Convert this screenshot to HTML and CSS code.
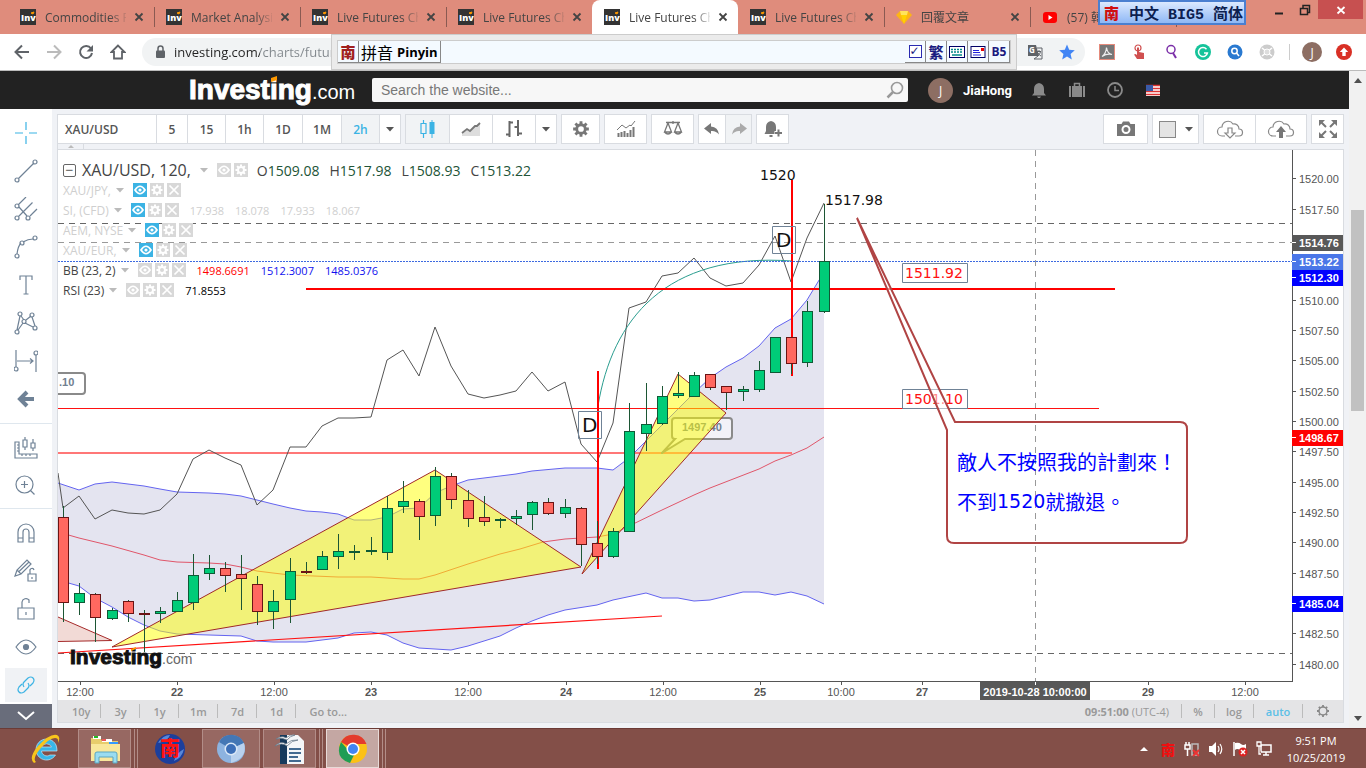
FILE: index.html
```html
<!DOCTYPE html>
<html lang="en">
<head>
<meta charset="UTF-8">
<meta name="viewport" content="width=device-width, initial-scale=1.0">
<title>Live Futures Charts</title>
<link rel="stylesheet" href="styles.css">
</head>
<body>

<!-- shared icons -->
<svg class="sprite" aria-hidden="true">
  <symbol id="i-inv" viewBox="0 0 16 16"><rect width="16" height="16" fill="#333"/><text x="1" y="12" font-family="Open Sans, sans-serif" font-size="9" font-weight="800" fill="#fff">Inv</text><path d="M11 4l3-1-1 2z" fill="#f90" stroke="#f90"/></symbol>
  <symbol id="i-x" viewBox="0 0 10 10"><path d="M1.5 1.5l7 7M8.500 1.500l-7 7" stroke="currentColor" stroke-width="1.800" fill="none"/></symbol>
  <symbol id="i-eye" viewBox="0 0 14 14"><path d="M2 7q5-7.500 10 0q-5 7.500-10 0z" fill="none" stroke="#fff" stroke-width="1.700"/><circle cx="7" cy="7" r="1.600" fill="#fff"/></symbol>
  <symbol id="i-gear" viewBox="0 0 14 14"><circle cx="7" cy="7" r="3" fill="none" stroke="currentColor" stroke-width="2"/><path d="M7 1.500v2M7 10.500v2M1.500 7h2M10.500 7h2M3.100 3.100l1.400 1.400M9.500 9.500l1.400 1.400M10.900 3.100l-1.400 1.400M4.500 9.500l-1.400 1.400" stroke="currentColor" stroke-width="2"/></symbol>
  <symbol id="i-del" viewBox="0 0 14 14"><path d="M2.500 2.500l9 9M11.500 2.500l-9 9" stroke="#fff" stroke-width="1.700"/></symbol>
  <symbol id="i-caret" viewBox="0 0 8 5"><path d="M0 0h8L4 4.500z" fill="currentColor"/></symbol>
</svg>

<div class="tabstrip">
  <div class="tab"><svg class="fav"><use href="#i-inv"/></svg><a href="#" class="tab-title">Commodities Futures</a><button class="tab-close" aria-label="Close tab"><svg><use href="#i-x"/></svg></button></div>
  <div class="tab"><svg class="fav"><use href="#i-inv"/></svg><a href="#" class="tab-title">Market Analysis</a><button class="tab-close" aria-label="Close tab"><svg><use href="#i-x"/></svg></button></div>
  <div class="tab"><svg class="fav"><use href="#i-inv"/></svg><a href="#" class="tab-title">Live Futures Charts</a><button class="tab-close" aria-label="Close tab"><svg><use href="#i-x"/></svg></button></div>
  <div class="tab no-sep"><svg class="fav"><use href="#i-inv"/></svg><a href="#" class="tab-title">Live Futures Charts</a><button class="tab-close" aria-label="Close tab"><svg><use href="#i-x"/></svg></button></div>
  <div class="tab active no-sep"><svg class="fav"><use href="#i-inv"/></svg><a href="#" class="tab-title">Live Futures Charts</a><button class="tab-close" aria-label="Close tab"><svg><use href="#i-x"/></svg></button></div>
  <div class="tab"><svg class="fav"><use href="#i-inv"/></svg><a href="#" class="tab-title">Live Futures Charts</a><button class="tab-close" aria-label="Close tab"><svg><use href="#i-x"/></svg></button></div>
  <div class="tab"><svg class="fav" viewBox="0 0 16 16"><path d="M4 2h8l4 4-8 9-8-9z" fill="#fdb515"/><path d="M4 2h8l-1 4H5z" fill="#ffe45c"/><path d="M5 6h6l-3 9z" fill="#ffd200"/></svg><a href="#" class="tab-title">回覆文章</a><button class="tab-close" aria-label="Close tab"><svg><use href="#i-x"/></svg></button></div>
  <div class="tab"><svg class="fav" viewBox="0 0 16 16"><rect x="1" y="3" width="14" height="11" rx="3" fill="#f00"/><path d="M6.500 6v5l4-2.500z" fill="#fff"/></svg><a href="#" class="tab-title">(57) 韓</a></div>
  <div class="win-controls">
    <button aria-label="Minimize"><svg viewBox="0 0 12 12"><path d="M2 9.500h8" stroke="#222" stroke-width="2"/></svg></button>
    <button aria-label="Restore"><svg viewBox="0 0 12 12"><path d="M1.500 4.500h7v6h-7zM4 4V1.500h6.500v7H9" fill="none" stroke="#222" stroke-width="1.500"/></svg></button>
    <button class="win-close" aria-label="Close"><svg viewBox="0 0 12 12"><path d="M2.500 3l7 6.500M9.500 3l-7 6.500" stroke="#fff" stroke-width="1.800"/></svg></button>
  </div>
</div>

<div class="ime-badge"><b class="nan">南</b><span>中文 BIG5 简体</span></div>

<div class="navbar">
  <button class="nav-btn" aria-label="Back"><svg viewBox="0 0 16 16"><path d="M15 8H2M8 1.500L1.500 8 8 14.500" fill="none" stroke="#5f6368" stroke-width="2"/></svg></button>
  <button class="nav-btn" aria-label="Forward"><svg viewBox="0 0 16 16"><path d="M1 8h13M8 1.500L14.500 8 8 14.500" fill="none" stroke="#bbb" stroke-width="2"/></svg></button>
  <button class="nav-btn" aria-label="Reload"><svg viewBox="0 0 16 16"><path d="M13 4.500A6 6 0 1 0 14 9" fill="none" stroke="#5f6368" stroke-width="2"/><path d="M15 1v6.500H8.500z" fill="#5f6368"/></svg></button>
  <button class="nav-btn" aria-label="Home"><svg viewBox="0 0 16 16"><path d="M8 1.500L1.500 8H4v6.500h8V8h2.500z" fill="none" stroke="#5f6368" stroke-width="1.800"/></svg></button>
  <div class="address">
    <svg class="lock" viewBox="0 0 12 14"><rect x="2" y="5.500" width="9" height="7.500" rx="1" fill="#5f6368"/><path d="M4 6V3.500a2.500 2.500 0 0 1 5 0V6" fill="none" stroke="#5f6368" stroke-width="1.500"/></svg>
    <input type="text" value="investing.com/charts/futures-charts" aria-label="Address">
    <div class="address-icons">
      <button aria-label="Translate"><svg viewBox="0 0 16 16"><path d="M1 1h8l3 11H1z" fill="#5f6368"/><text x="2" y="9" font-family="Open Sans" font-size="8" font-weight="700" fill="#fff">G</text><path d="M10 4h5v11H7l4-3M9.500 7.500h4.500M12 6v1.500M10.500 12q3-2 3-4.500M11 9q1 2 3 3" fill="none" stroke="#5f6368"/></svg></button>
      <button aria-label="Bookmark"><svg viewBox="0 0 16 16"><path d="M8 0.500l2.200 5.200 5.600.5-4.200 3.700 1.200 5.600L8 12.600l-4.800 2.900 1.200-5.600L.2 6.200l5.600-.5z" fill="#4285f4"/></svg></button>
    </div>
  </div>
  <div class="extensions">
    <button aria-label="PDF"><svg viewBox="0 0 16 16"><rect x=".5" y=".5" width="15" height="15" fill="#777" stroke="#e58a7b"/><path d="M3 12.500c2-1 4.500-5 4.500-9 .5 4 3 6.500 5.500 7-4-1-7 0-10 2z" fill="none" stroke="#eee" stroke-width="1.200"/></svg></button>
    <button aria-label="Touch"><svg viewBox="0 0 16 16"><circle cx="7" cy="4" r="3" fill="none" stroke="#d05050" stroke-width="1.200"/><path d="M6 3.500h2V8l5 1v6H6L3 10.500l1.500-.5L6 11z" fill="#d05050"/></svg></button>
    <button aria-label="Search"><svg viewBox="0 0 16 16"><circle cx="8" cy="5.500" r="4" fill="none" stroke="#7b2fa8" stroke-width="1.500"/><path d="M10 9l3 5" stroke="#7b2fa8" stroke-width="2"/></svg></button>
    <button aria-label="Grammar"><svg viewBox="0 0 16 16"><circle cx="8" cy="8" r="8" fill="#15c39a"/><path d="M11.500 5.200A4.500 4.500 0 1 0 12.400 9H9" fill="none" stroke="#fff" stroke-width="1.500"/></svg></button>
    <button aria-label="Lookup"><svg viewBox="0 0 16 16"><circle cx="8" cy="8" r="7.500" fill="#2979d0"/><circle cx="7.500" cy="7" r="2.700" fill="none" stroke="#fff" stroke-width="1.500"/><path d="M9.500 9l2.500 3" stroke="#fff" stroke-width="1.500"/></svg></button>
    <button aria-label="Disabled extension"><svg viewBox="0 0 16 16"><circle cx="8" cy="8" r="7.500" fill="#ccc"/><path d="M3 4l10 8M3 12l10-8" stroke="#fff" stroke-width="1.500"/><circle cx="8" cy="8" r="3" fill="#ddd" stroke="#fff"/></svg></button>
    <span class="divider"></span>
    <button class="avatar small">J</button>
    <button aria-label="Update"><svg viewBox="0 0 16 16"><circle cx="8" cy="8" r="8" fill="#d93025"/><path d="M8 3.500L3.800 8h2.500v4h3.400V8h2.500z" fill="#fff"/></svg></button>
  </div>
</div>

<div class="ime-bar">
  <div class="ime-inner">
    <b class="nan cell">南</b>
    <span class="cell pinyin">拼音 <b>Pinyin</b></span>
    <span class="spacer"></span>
    <label class="cell"><input type="checkbox" checked aria-label="Enable"></label>
    <button class="cell trad">繁</button>
    <button class="cell" aria-label="Keyboard"><svg viewBox="0 0 16 14"><rect x=".5" y="1.500" width="15" height="11" fill="#fff" stroke="#006"/><path d="M2 4.500h12M2 7h12" stroke="#088" stroke-width="1.500" stroke-dasharray="2 1"/><path d="M3 10h10" stroke="#088" stroke-width="1.500"/></svg></button>
    <button class="cell" aria-label="Mail"><svg viewBox="0 0 16 14"><rect x="1" y="1.500" width="14" height="11" fill="#fff" stroke="#006"/><path d="M3 5.500h6M3 7.500h7M3 10h8" stroke="#22d"/><rect x="11" y="3" width="3" height="3" fill="#e00"/></svg></button>
    <button class="cell b5">B5</button>
  </div>
</div>

<div class="viewport">
<div class="site">

  <header class="site-header">
    <a href="#" class="logo"><b>Investing</b><span>.com</span><svg class="spark" viewBox="0 0 6 6"><path d="M0 2L6 0v4L0 6z" fill="#f90"/></svg></a>
    <form class="search">
      <input type="text" placeholder="Search the website..." aria-label="Search the website">
      <button type="button" aria-label="Search"><svg viewBox="0 0 18 18"><circle cx="11" cy="7" r="5.500" fill="none" stroke="#999" stroke-width="1.600"/><path d="M7 11l-5.500 5.500" stroke="#999" stroke-width="2.500"/></svg></button>
    </form>
    <span class="avatar">J</span>
    <a href="#" class="user">JiaHong</a>
    <div class="head-icons">
      <button aria-label="Alerts"><svg viewBox="0 0 18 18"><path d="M9 2q5 1 5 6v4l2 2.500H2L4 12V8q0-5 5-6zM7 15.500h4l-1 1.500H8z" fill="#8a8a8a"/></svg></button>
      <button aria-label="Portfolio"><svg viewBox="0 0 18 18"><path d="M1 5h2v11H1zM4 5h10v11H4zM15 5h2v11h-2z" fill="#8a8a8a"/><path d="M6.500 5V2.500h5V5" fill="none" stroke="#8a8a8a" stroke-width="1.500"/></svg></button>
      <button aria-label="Recent"><svg viewBox="0 0 18 18"><circle cx="9" cy="9" r="7" fill="none" stroke="#8a8a8a" stroke-width="1.800"/><path d="M9 5v4.500h4" fill="none" stroke="#8a8a8a" stroke-width="1.500"/></svg></button>
      <button aria-label="Edition"><svg viewBox="0 0 18 18"><rect x="2" y="4" width="14" height="11" fill="#fff"/><path d="M2 4.500h14M2 7.500h14M2 10.500h14M2 13.500h14" stroke="#d33" stroke-width="1.300"/><rect x="2" y="4" width="7" height="6" fill="#3a5aa8"/></svg></button>
    </div>
  </header>

  <div class="app">
    <nav class="tools">
      <div class="tool-group">
        <button aria-label="Cross" class="blue"><svg viewBox="0 0 24 24"><path d="M12 1v8M12 15v8M1 12h8M15 12h8"/></svg></button>
        <button aria-label="Trend line"><svg viewBox="0 0 24 24"><path d="M4.500 19.500l15-15"/><circle cx="3" cy="21" r="2"/><circle cx="21" cy="3" r="2"/></svg></button>
        <button aria-label="Pitchfork"><svg viewBox="0 0 24 24"><path d="M4 8l8-8M4.500 19.500l14-14M16 19l7-7M5 10l8 9"/><circle cx="3" cy="9" r="2"/><circle cx="3" cy="21" r="2"/><circle cx="14" cy="21" r="2"/></svg></button>
        <button aria-label="Brush"><svg viewBox="0 0 24 24"><path d="M3 19q1-8 4-11M9 7q5-3 10-3"/><circle cx="3" cy="21" r="2"/><circle cx="8" cy="8" r="2"/><circle cx="21" cy="3" r="2"/></svg></button>
        <button aria-label="Text"><svg viewBox="0 0 24 24"><path d="M6 7V3h12v4M12 3v18M9.500 21h5"/></svg></button>
        <button aria-label="Pattern"><svg viewBox="0 0 24 24"><path d="M3 19L6 5M7 5l3 4M12 9l5-4M11 12l8 4M4 19l5-7M18 6l3 9"/><circle cx="3" cy="21" r="2"/><circle cx="6" cy="3" r="2"/><circle cx="10" cy="10.500" r="2"/><circle cx="18" cy="4" r="2"/><circle cx="21" cy="17" r="2"/></svg></button>
        <button aria-label="Range"><svg viewBox="0 0 24 24"><path d="M2 1v17M22 6v17M3 12h15M16 9.500l3 2.500-3 2.500"/><circle cx="2" cy="20" r="2"/><circle cx="22" cy="4" r="2"/></svg></button>
        <button aria-label="Previous"><svg viewBox="0 0 24 24"><path d="M20 12H7M13 5l-7 7 7 7" stroke-width="4"/></svg></button>
      </div>
      <div class="tool-group">
        <button aria-label="Measure"><svg viewBox="0 0 24 24"><path d="M1 6v16h22v-4H5V6zM3 9h2M3 12h2M3 15h2M8 20v-2M12 20v-2M16 20v-2M9 4h4v7H9zM11 1v3M11 11v3M17 7h4v5h-4zM19 3v4M19 12v3"/></svg></button>
        <button aria-label="Zoom in"><svg viewBox="0 0 24 24"><circle cx="10.500" cy="10.500" r="8.500"/><path d="M10.500 7v7M7 10.500h7M16.500 16.500l4 4"/></svg></button>
      </div>
      <div class="tool-group">
        <button aria-label="Magnet"><svg viewBox="0 0 24 24"><path d="M4 21V11a8 8 0 0 1 16 0v10h-5V11a3 3 0 0 0-6 0v10zM4 17h5M15 17h5"/></svg></button>
        <button aria-label="Drawing mode"><svg viewBox="0 0 24 24"><path d="M1 17l2-6L13 1l4 4L7 15zM3 11l4 4M5 12.500L15 3"/><path d="M14 15h8v7h-8zM16 15v-3a2 2 0 0 1 4-1M18 18v2"/></svg></button>
        <button aria-label="Lock"><svg viewBox="0 0 24 24"><path d="M4 11h16v11H4zM8 11V5a4 4 0 0 1 7-2v3M12 15v3"/></svg></button>
        <button aria-label="Hide"><svg viewBox="0 0 24 24"><path d="M2 12q10-14 20 0q-10 14-20 0z"/><circle cx="12" cy="12" r="2.500" fill="#6f8296"/></svg></button>
        <button aria-label="Link" class="blue on"><svg viewBox="0 0 24 24"><path d="M10 14q-2-3 0-5l4-4q3-2 5 0t0 5l-3 3M14 10q2 3 0 5l-4 4q-3 2-5 0t0-5l3-3"/></svg></button>
      </div>
      <button class="tools-more" aria-label="More tools"><svg viewBox="0 0 20 12"><path d="M2 2l8 7 8-7" fill="none" stroke="#fff" stroke-width="2"/></svg></button>
    </nav>

    <main class="work">
      <div class="toolbar">
        <div class="btns">
          <button class="symbol">XAU/USD</button>
          <button class="w31">5</button>
          <button>15</button>
          <button>1h</button>
          <button class="w39">1D</button>
          <button class="w39">1M</button>
          <button class="on">2h</button>
          <button class="drop" aria-label="More intervals"><svg><use href="#i-caret"/></svg></button>
        </div>
        <div class="btns">
          <button class="w43 on" aria-label="Candles"><svg viewBox="0 0 20 20"><path d="M5.500 1v3M5.500 15v4M3 4.500h5v10H3z" fill="none" stroke="currentColor" stroke-width="1.200"/><path d="M14 1v18" stroke="currentColor"/><path d="M11.500 3h5v12h-5z" fill="currentColor"/></svg></button>
          <button class="w43" aria-label="Area"><svg viewBox="0 0 20 20"><path d="M1 14l5-4 3 2 5-5 5-3v13H1z" fill="#ddd"/><path d="M1 14l5-4 3 2 5-5h2l3-3" fill="none" stroke="#777" stroke-width="1.800"/></svg></button>
          <button class="w43" aria-label="Bars"><svg viewBox="0 0 20 20"><path d="M5.500 2v16M2 15.500h3.500M5.500 3.500H9M14 1v16M10.500 8H14M14 14.500h4" fill="none" stroke="#666" stroke-width="2"/></svg></button>
          <button class="drop" aria-label="More styles"><svg><use href="#i-caret"/></svg></button>
        </div>
        <div class="btns"><button class="w37 grey" aria-label="Settings"><svg><use href="#i-gear"/></svg></button></div>
        <div class="btns"><button class="w41" aria-label="Indicators"><svg viewBox="0 0 20 20"><path d="M2.500 18v-4M5.500 18v-5M8.500 18v-6M11.500 18v-4M14.500 18v-7M17.500 18V8" stroke="#777" stroke-width="2"/><path d="M1 11l5-5 4 3 4-3 1 1 4-5" fill="none" stroke="#777"/></svg></button></div>
        <div class="btns"><button class="w41" aria-label="Compare"><svg viewBox="0 0 20 20"><path d="M3 3.500h14M10 2v3M5 4l-3.500 9h7zM15 4l-3.500 9h7zM1.500 13q3.500 4 7 0M11.500 13q3.500 4 7 0" fill="none" stroke="#777" stroke-width="1.300"/></svg></button></div>
        <div class="btns">
          <button class="w26" aria-label="Undo"><svg viewBox="0 0 20 20"><path d="M9 4v3.500q7 .5 8 8-3-4-8-3.500V15L2 9.500z" fill="#777"/></svg></button>
          <button class="w26 off" aria-label="Redo"><svg viewBox="0 0 20 20"><path d="M11 4v3.500q-7 .5-8 8 3-4 8-3.500V15l7-5.500z" fill="#aaa"/></svg></button>
        </div>
        <div class="btns"><button class="w31" aria-label="Add alert"><svg viewBox="0 0 20 20"><path d="M8 2q5 1 5 6v4l1.500 3h-13L3 12V8q0-5 5-6zM6.500 16h3v2h-3z" fill="#777"/><path d="M15.500 10v8M11.500 14h8" stroke="#fff" stroke-width="4"/><path d="M15.500 10.500v7M12 14h7" stroke="#777" stroke-width="2"/></svg></button></div>
        <span class="spacer"></span>
        <div class="btns"><button class="w43" aria-label="Snapshot"><svg viewBox="0 0 20 20"><path d="M1 5h4.500L7 2.500h6L14.500 5H19v12H1z" fill="#777"/><circle cx="10" cy="10.500" r="3.500" fill="none" stroke="#fff" stroke-width="2"/></svg></button></div>
        <div class="btns"><button class="w45 color" aria-label="Background"><i></i><svg><use href="#i-caret"/></svg></button></div>
        <div class="btns">
          <button class="w51" aria-label="Load"><svg class="cloud" viewBox="0 0 28 20"><path d="M9 17H6a4.500 4.500 0 0 1 0-9 6 6 0 0 1 11-3 5 5 0 0 1 6 5 3.500 3.500 0 0 1 0 7h-4" fill="none" stroke="#888" stroke-width="1.200"/><path d="M12 9h4v5h3l-5 5-5-5h3z" fill="none" stroke="#888" stroke-width="1.200"/></svg></button>
          <button class="w51" aria-label="Save"><svg class="cloud" viewBox="0 0 28 20"><path d="M9 17H6a4.500 4.500 0 0 1 0-9 6 6 0 0 1 11-3 5 5 0 0 1 6 5 3.500 3.500 0 0 1 0 7h-4" fill="none" stroke="#888" stroke-width="1.200"/><path d="M12 19v-6H9l5-6 5 6h-3v6z" fill="#777"/></svg></button>
        </div>
        <div class="btns"><button class="w31" aria-label="Fullscreen"><svg viewBox="0 0 20 20"><path d="M1 1h6L1 7zM19 1v6l-6-6zM1 19v-6l6 6zM19 19h-6l6-6z" fill="#777"/><path d="M3 3l5 5M17 3l-5 5M3 17l5-5M17 17l-5-5" stroke="#777" stroke-width="2"/></svg></button></div>
      </div>
      <div class="strip"><span><svg viewBox="0 0 8 4"><path d="M1 4l3-3 3 3z" fill="#bbb"/></svg></span></div>

      <div class="frame">
        <div class="chart">
          <svg id="chart" viewBox="58 150 1285 550" preserveAspectRatio="xMinYMin meet" role="img" aria-label="XAU/USD 2 hour chart">
            <g id="band"></g>
            <g class="dash">
              <path d="M58 223.500H1292M58 653.500H1292"/>
              <path class="light" d="M58 242.500H1292M1035.500 150V682"/>
            </g>
            <path d="M58 617L112 640.500 58 641.500" class="pink"/>
            <path d="M58 653L662 616" class="red"/>
            <path d="M58 408.500H1099" class="red"/>
            <path d="M58 453H792" class="red wide soft"/>
            <g class="note">
              <path d="M675 418H729Q732 418 732 421V436Q732 439 729 439H685L662 453 675 439Q672 439 672 436V421Q672 418 675 418z"/>
              <text x="682" y="431">1497.40</text>
              <path d="M58 373H82Q85 373 85 376V391Q85 394 82 394H58"/>
              <text x="59" y="386">.10</text>
              <path d="M661 453h2"/>
            </g>
            <g class="tri">
              <path d="M112 647L435 470 581 567z"/>
              <path d="M582 574L678 374 726 413z"/>
            </g>
            <path id="rsi" class="rsi"/>
            <path d="M598 406C612 320 665 252 792 261" class="arc"/>
            <path d="M306 289H1115M598 371V569M792 180V376" class="red wide"/>
            <path d="M58 261.500H1292" class="last"/>
            <g id="candles"></g>
            <g class="tagbox">
              <path d="M772.500 226.500h23v27h-23zM578.500 411.500h23v27h-23zM902.500 263.500h65v19h-65zM902.500 389.500h65v19h-65z"/>
              <text x="776" y="247" class="big">D</text>
              <text x="582" y="432" class="big">D</text>
              <text x="760" y="180">1520</text>
              <text x="825" y="205">1517.98</text>
              <text x="905" y="278" class="r">1511.92</text>
              <text x="905" y="404" class="r">1501.10</text>
            </g>
            <path class="callout" d="M857 218L955 422H1180Q1187 422 1187 429V536Q1187 543 1180 543H954Q947 543 947 536V430z"/>
            <path class="cross" d="M1035.500 425V543"/>
            <g class="memo">
              <text x="957" y="470">敵人不按照我的計劃來！</text>
              <text x="957" y="510">不到<tspan class="num" dy="-2">1520</tspan><tspan dy="2">就撤退。</tspan></text>
            </g>
            <g class="mark">
              <text x="70" y="664" class="mark-b">Investing</text>
              <text x="162" y="664" class="mark-c">.com</text>
              <path d="M131 649l5-2v2l-5 2z"/>
            </g>
            <path d="M1292.500 150V682M58 681.500H1293" class="axis"/>
            <g id="prices"></g>
            <g id="times"></g>
          </svg>
          <div class="legend">
            <div class="row main"><button class="fold" aria-label="Collapse">−</button><span>XAU/USD, 120,</span><svg class="car"><use href="#i-caret"/></svg>
              <button aria-label="Show"><svg><use href="#i-eye"/></svg></button><button aria-label="Format"><svg><use href="#i-gear"/></svg></button>
              <span class="ohlc"><span>O<b>1509.08</b></span><span>H<b>1517.98</b></span><span>L<b>1508.93</b></span><span>C<b>1513.22</b></span></span></div>
            <div class="row dim"><span>XAU/JPY,</span><svg class="car"><use href="#i-caret"/></svg><button class="hid" aria-label="Show"><svg><use href="#i-eye"/></svg></button><button aria-label="Format"><svg><use href="#i-gear"/></svg></button><button aria-label="Delete"><svg><use href="#i-del"/></svg></button></div>
            <div class="row dim"><span>SI, (CFD)</span><svg class="car"><use href="#i-caret"/></svg><button class="hid" aria-label="Show"><svg><use href="#i-eye"/></svg></button><button aria-label="Format"><svg><use href="#i-gear"/></svg></button><button aria-label="Delete"><svg><use href="#i-del"/></svg></button><span class="vals"><span>17.938</span><span>18.078</span><span>17.933</span><span>18.067</span></span></div>
            <div class="row dim"><span>AEM, NYSE</span><svg class="car"><use href="#i-caret"/></svg><button class="hid" aria-label="Show"><svg><use href="#i-eye"/></svg></button><button aria-label="Format"><svg><use href="#i-gear"/></svg></button><button aria-label="Delete"><svg><use href="#i-del"/></svg></button></div>
            <div class="row dim"><span>XAU/EUR,</span><svg class="car"><use href="#i-caret"/></svg><button class="hid" aria-label="Show"><svg><use href="#i-eye"/></svg></button><button aria-label="Format"><svg><use href="#i-gear"/></svg></button><button aria-label="Delete"><svg><use href="#i-del"/></svg></button></div>
            <div class="row"><span>BB (23, 2)</span><svg class="car"><use href="#i-caret"/></svg><button aria-label="Show"><svg><use href="#i-eye"/></svg></button><button aria-label="Format"><svg><use href="#i-gear"/></svg></button><button aria-label="Delete"><svg><use href="#i-del"/></svg></button><span class="vals"><span class="c-red">1498.6691</span><span class="c-blue">1512.3007</span><span class="c-blue">1485.0376</span></span></div>
            <div class="row"><span>RSI (23)</span><svg class="car"><use href="#i-caret"/></svg><button aria-label="Show"><svg><use href="#i-eye"/></svg></button><button aria-label="Format"><svg><use href="#i-gear"/></svg></button><button aria-label="Delete"><svg><use href="#i-del"/></svg></button><span class="vals c-black"><span>71.8553</span></span></div>
          </div>
        </div>
        <div class="ranges">
          <button>10y</button><button>3y</button><button>1y</button><button>1m</button><button>7d</button><button>1d</button><button class="goto">Go to...</button>
          <span class="spacer"></span>
          <span class="clock"><b>09:51:00</b> (UTC-4)</span>
          <button class="sep-l">%</button><button>log</button><button class="auto">auto</button><button class="goto" aria-label="Chart settings"><svg class="cog" viewBox="0 0 14 14"><circle cx="7" cy="7" r="4" fill="none" stroke="#888" stroke-width="1.500"/><path d="M7 1v2M7 11v2M1 7h2M11 7h2M2.800 2.800l1.400 1.400M9.800 9.800l1.400 1.400M11.200 2.800L9.800 4.200M4.200 9.800l-1.400 1.400" stroke="#888" stroke-width="1.800"/></svg></button>
        </div>
      </div>
    </main>
  </div>
</div>

<div class="scrollbar">
  <svg viewBox="0 0 8 5"><path d="M0 5h8L4 0z" fill="#505050"/></svg>
  <div class="track"><div class="thumb"></div></div>
  <svg viewBox="0 0 8 5"><path d="M0 0h8L4 5z" fill="#505050"/></svg>
</div>
</div>

<footer class="taskbar">
  <button class="task bare" aria-label="Internet Explorer"><svg viewBox="0 0 32 32"><path d="M26 12A10.500 10.500 0 1 0 25.500 22H20a5.500 5.500 0 0 1-8.500-4H27q0-3-1-6zM11.500 14a5.500 5.500 0 0 1 10 0z" fill="#38b6e8" stroke="#bdeaff" stroke-width=".7" fill-rule="evenodd"/><path d="M4 30Q-2 25 8 13 20 0 27 2q4 2 1 8 1-5-3-5-6 0-15 11-8 10-4 13z" fill="#f8c51c"/></svg></button>
  <button class="task stack" aria-label="Explorer"><svg viewBox="0 0 32 32"><path d="M2 5h9l2 3h16v19H2z" fill="#e8cd6c"/><path d="M2 11h29v17H2z" fill="#f9e79b"/><path d="M4 3h8v3H4z" fill="#fff"/><path d="M5 3h4v2H5z" fill="#2b2"/><path d="M13 6h10v3H13z" fill="#fff"/><path d="M13 6h4v2h-4z" fill="#e55"/><path d="M20 9h9v2h-9z" fill="#39f"/><path d="M6 30v-9q0-2 2-2h18q2 0 2 2v9h-4v-6H10v6z" fill="#9adcf0" stroke="#5ba6c0"/></svg></button>
  <button class="task bare" aria-label="NJStar"><svg viewBox="0 0 32 32"><circle cx="16" cy="16" r="15" fill="#1d3f9c"/><path d="M4 10q5-8 12-8-2 6-12 8zM20 28q8-3 10-12-8 4-10 12z" fill="#5a87d8"/><text x="6" y="23" font-family="Noto Sans CJK SC" font-size="20" font-weight="900" fill="#f11">南</text></svg></button>
  <button class="task" aria-label="Chromium"><svg viewBox="0 0 32 32"><circle cx="16" cy="16" r="14" fill="#8db3e0"/><path d="M16 16L4 9A14 14 0 0 1 29 10z" fill="#4477b5"/><path d="M16 16l13-6q4 15-13 20z" fill="#b9d1ee"/><circle cx="16" cy="16" r="6.500" fill="#dbe8f7"/><circle cx="16" cy="16" r="5" fill="#3c6fb8"/></svg></button>
  <button class="task stack" aria-label="Writer"><svg viewBox="0 0 32 32"><path d="M6 2h18l6 6v23H6z" fill="#f4f6f8"/><path d="M6 2h7v29H6z" fill="#173a5c"/><path d="M15 16h12M15 20h12M15 24h9M15 28h12" stroke="#426a90" stroke-width="1.800"/><path d="M1 13q6-6 11-2 5-5 12-4-6 0-11 6-5-4-12 0zM2 6q6-4 10-1 4-4 9-3-5 1-8 5-5-3-11-1z" fill="#fff" stroke="#678" stroke-width=".8"/></svg></button>
  <button class="task stack current" aria-label="Chrome"><svg viewBox="0 0 32 32"><circle cx="16" cy="16" r="14" fill="#fbc116"/><path d="M16 16L4 9A14 14 0 0 1 29.500 11H16z" fill="#e33b2e"/><path d="M4 9l8 9 5 4-4 8Q-3 25 4 9z" fill="#1f9d55"/><circle cx="16" cy="16" r="6.500" fill="#fff"/><circle cx="16" cy="16" r="5" fill="#4285f4"/></svg></button>
  <span class="spacer"></span>
  <div class="tray">
    <button aria-label="Show hidden icons"><svg viewBox="0 0 16 16"><path d="M4 10h8L8 6z" fill="#fff"/></svg></button>
    <button class="nan" aria-label="NJStar input">南</button>
    <button aria-label="Power"><svg viewBox="0 0 16 16"><path d="M2 1v3M5 1v3M1 4h5v4H1zM3.500 8v7" stroke="#fff" stroke-width="1.500" fill="none"/><path d="M8 3h6v11H8z" fill="none" stroke="#bbb" stroke-width="1.500"/><path d="M9 9l6 6M15 9l-6 6" stroke="#e33" stroke-width="2"/></svg></button>
    <button aria-label="Volume"><svg viewBox="0 0 16 16"><path d="M1 5h3l4-4v14l-4-4H1z" fill="#fff"/><path d="M10 5q2 3 0 6M12 3q3.500 5 0 10" stroke="#fff" fill="none" stroke-width="1.200"/></svg></button>
    <button aria-label="Action center"><svg viewBox="0 0 16 16"><path d="M2 1v14" stroke="#fff" stroke-width="1.500"/><path d="M3 2q4-1 6 1t5 0v7q-3 1-6-1T3 9z" fill="#fff"/><circle cx="11" cy="11" r="4.500" fill="#d22"/><path d="M9 9l4 4M13 9l-4 4" stroke="#fff" stroke-width="1.500"/></svg></button>
    <button aria-label="Network"><svg viewBox="0 0 16 16"><path d="M5 4h10v7H5zM10 11v3M7 14h6" fill="none" stroke="#fff" stroke-width="1.500"/><path d="M1 1h4v4H1zM3 5v8h2" fill="#834f48" stroke="#fff" stroke-width="1.300"/></svg></button>
    <time><span>9:51 PM</span><span>10/25/2019</span></time>
  </div>
</footer>

<script src="chart.js"></script>
</body>
</html>
```
FILE: styles.css
```css
* {
  box-sizing: border-box;
}

body {
  margin: 0;
  height: 100vh;
  display: flex;
  flex-direction: column;
  overflow: hidden;
  position: relative;
  font-family: "Open Sans", "Noto Sans CJK TC", sans-serif;
  font-size: 12px;
  color: #444;
}

button {
  border: 0;
  padding: 0;
  background: none;
  font: inherit;
  color: inherit;
  display: flex;
  align-items: center;
  justify-content: center;
}

input {
  border: 0;
  padding: 0;
  outline: 0;
  min-width: 0;
  background: none;
  font: inherit;
}

a {
  color: inherit;
  text-decoration: none;
}

.sprite {
  display: none;
}

.spacer {
  flex: 1;
}

.nan {
  color: #b01818;
  font-family: "Noto Sans CJK SC", sans-serif;
  font-weight: 900;
}

/* browser tabs */
.tabstrip {
  display: flex;
  height: 34px;
  padding-left: 8px;
  background: #df8c7c;
}

.tab {
  flex: 0 0 146px;
  min-width: 0;
  display: flex;
  align-items: center;
  padding: 0 10px 0 12px;
  position: relative;
}

.tab::after {
  content: "";
  position: absolute;
  right: -1px;
  top: 7px;
  width: 1px;
  height: 20px;
  background: #8a5a52;
}

.tab.no-sep::after {
  display: none;
}

.tab.active {
  background: #fff;
  border-radius: 8px 8px 0 0;
}

.fav {
  flex: none;
  width: 16px;
  height: 16px;
}

.tab-title {
  flex: 1;
  min-width: 0;
  margin: 0 8px 0 9px;
  overflow: hidden;
  white-space: nowrap;
  -webkit-mask-image: linear-gradient(to right, #000 64px, transparent 84px);
  mask-image: linear-gradient(to right, #000 64px, transparent 84px);
}

.tab-close svg {
  width: 10px;
  height: 10px;
}

.win-controls {
  display: flex;
  margin-left: auto;
  margin-right: 3px;
  height: 19px;
}

.win-controls button {
  width: 26px;
}

.win-controls svg {
  width: 12px;
  height: 12px;
}

.win-controls .win-close {
  width: 45px;
  background: #c75050;
}

.ime-badge {
  position: absolute;
  z-index: 3;
  right: 120px;
  top: 0;
  width: 148px;
  height: 25px;
  display: flex;
  align-items: center;
  gap: 10px;
  padding-left: 4px;
  border: 2px solid #4a7fd0;
  background: linear-gradient(#dbe9ff, #8fb8f5);
  color: #0c2050;
  font: bold 15px "Liberation Mono", "Noto Sans CJK SC", monospace;
  white-space: nowrap;
  overflow: hidden;
}

.ime-badge .nan {
  color: #d01010;
}

/* navigation row */
.navbar {
  display: flex;
  align-items: center;
  height: 37px;
  padding: 0 14px;
  background: #fff;
  border-bottom: 1px solid #bbb;
}

.nav-btn {
  width: 16px;
  height: 16px;
  margin-right: 16px;
}

.nav-btn svg {
  width: 16px;
  height: 16px;
}

.address {
  flex: 1;
  display: flex;
  align-items: center;
  height: 28px;
  margin-right: 14px;
  padding: 0 10px 0 12px;
  border-radius: 14px;
  background: #f1f3f4;
}

.lock {
  width: 12px;
  height: 14px;
  margin-right: 8px;
}

.address input {
  flex: 1;
  font-size: 13px;
  color: transparent;
  background: linear-gradient(to right, #222 86px, #80868b 86px);
  -webkit-background-clip: text;
  background-clip: text;
}

.address-icons, .extensions {
  display: flex;
  align-items: center;
  gap: 16px;
}

.address-icons svg, .extensions svg {
  display: block;
  width: 16px;
  height: 16px;
}

.divider {
  width: 1px;
  height: 16px;
  margin: 0 -4px 0 -2px;
  background: #ccc;
}

.avatar {
  display: flex;
  align-items: center;
  justify-content: center;
  width: 25px;
  height: 25px;
  border-radius: 50%;
  background: #8d6e63;
  color: #fff;
}

.avatar.small {
  width: 20px;
  height: 20px;
  margin-right: -2px;
}

/* floating input method bar */
.ime-bar {
  position: absolute;
  z-index: 2;
  top: 34px;
  left: 331px;
  right: 349px;
  height: 36px;
  padding: 5px;
  border: 1px solid #ccc;
  background: #ebebeb;
}

.ime-inner {
  display: flex;
  height: 24px;
  border: 1px solid #ccc;
  background: #f4faff;
}

.cell {
  display: flex;
  align-items: center;
  justify-content: center;
  width: 21px;
  height: 22px;
  border-right: 1px solid #888;
  border-bottom: 1px solid #888;
  color: #1a1a80;
  font-size: 15px;
}

.cell.nan {
  color: #a02020;
}

.cell.trad {
  font-weight: 700;
}

.cell.pinyin {
  width: auto;
  gap: 4px;
  padding: 0 2px;
  color: #000;
  font-size: 16px;
}

.pinyin b {
  font-size: 13px;
}

.cell.b5 {
  font-size: 12px;
  font-weight: 700;
}

.cell input {
  width: 13px;
  height: 13px;
  margin: 0;
  appearance: none;
  border: 1px solid #2a2ab0;
  background: #fff;
}

.cell input:checked {
  background: #fff linear-gradient(45deg, transparent 44%, #1a1a80 44%, #1a1a80 58%, transparent 58%);
  clip-path: none;
}

.cell input:checked::after {
  content: "✓";
  display: block;
  font: bold 12px/11px "DejaVu Sans", sans-serif;
  color: #1a1a80;
}

.cell input:checked {
  background: #fff;
}

.cell svg {
  width: 16px;
  height: 14px;
}

/* web page */
.viewport {
  flex: 1;
  display: flex;
  min-height: 0;
}

.site {
  flex: 1;
  min-width: 0;
  display: flex;
  flex-direction: column;
  background: #f0f2f6;
}

.site-header {
  display: flex;
  align-items: center;
  height: 38px;
  padding-left: 189px;
  background: #222;
}

.logo {
  position: relative;
  display: flex;
  align-items: baseline;
  width: 183px;
  font-family: "Liberation Sans", Arial, sans-serif;
  color: #fff;
}

.logo b {
  font-size: 28px;
  line-height: 36px;
  -webkit-text-stroke: 1px #fff;
}

.logo span {
  font-size: 20px;
}

.spark {
  position: absolute;
  left: 82px;
  top: 4px;
  width: 6px;
  height: 6px;
}

.search {
  flex: 0 1 536px;
  display: flex;
  align-items: center;
  height: 24px;
  padding: 0 4px 0 9px;
  border-radius: 2px;
  background: #f7f7f7;
}

.search input {
  flex: 1;
  font: 14px "Liberation Sans", Arial, sans-serif;
}

.search input::placeholder {
  color: #777;
}

.search svg {
  width: 18px;
  height: 18px;
}

.site-header .avatar {
  margin-left: 20px;
}

.user {
  width: 67px;
  margin-left: 10px;
  font: bold 13px Roboto, sans-serif;
  color: #fff;
}

.head-icons {
  display: flex;
  gap: 20px;
}

.head-icons svg {
  width: 18px;
  height: 18px;
}

.app {
  flex: 1;
  display: flex;
  min-height: 0;
}

/* drawing tools */
.tools {
  width: 52px;
  display: flex;
  flex-direction: column;
  padding-top: 5px;
  background: #fff;
  overflow: hidden;
}

.tool-group {
  margin-bottom: 7px;
}

.tool-group:nth-child(n+2) {
  margin-bottom: 5px;
}

.tool-group + .tool-group {
  padding-top: 5px;
  border-top: 1px solid #dfe7ee;
}

.tool-group button {
  width: 42px;
  height: 34px;
  margin: 2px 5px 4px;
}

.tool-group button:last-child {
  margin-bottom: 0;
}

.tool-group svg {
  width: 24px;
  height: 24px;
  fill: none;
  stroke: #6f8296;
  stroke-width: 1.2;
}

.tool-group .blue svg {
  stroke: #3bb3e4;
}

.tool-group .on {
  background: #f0f2f5;
}

.tools .tool-group:nth-child(3) {
  margin-bottom: 0;
}

.tools-more {
  flex: none;
  height: 24px;
  margin-top: auto;
  background: #696d7b;
}

.tools-more svg {
  width: 20px;
  height: 12px;
}

/* chart toolbar */
.work {
  flex: 1;
  min-width: 0;
  display: flex;
  flex-direction: column;
  padding: 5px;
}

.toolbar {
  display: flex;
  gap: 4px;
}

.btns {
  display: flex;
  height: 30px;
  border: 1px solid #d9dce1;
  background: #fff;
}

.btns button {
  width: 38px;
  font-weight: 600;
  color: #555;
}

.btns button + button {
  border-left: 1px solid #d9dce1;
}

.btns .symbol {
  width: 98px;
  padding-left: 7px;
  justify-content: flex-start;
}

.btns .drop { width: 21px; }
.btns .w26 { width: 26px; }
.btns .w31 { width: 31px; }
.btns .w37 { width: 37px; }
.btns .w39 { width: 39px; }
.btns .w41 { width: 41px; }
.btns .w43 { width: 43px; }
.btns .w45 { width: 45px; }
.btns .w51 { width: 51px; }

.btns .on {
  background: #f1f3f5;
  color: #3bb3e4;
}

.btns .off {
  background: #f1f3f5;
}

.btns .grey {
  color: #777;
}

.btns svg {
  width: 20px;
  height: 20px;
}

.btns .drop svg, .btns .color svg {
  width: 8px;
  height: 5px;
}

.btns .cloud {
  width: 28px;
}

.btns .color {
  gap: 9px;
}

.color i {
  width: 17px;
  height: 17px;
  border: 1px solid #888;
  background: #e4e4e4;
}

.strip {
  height: 5px;
  border-left: 1px solid #d9dce1;
}

.strip span {
  display: flex;
  justify-content: center;
  width: 26px;
  height: 5px;
  border-right: 1px solid #d9dce1;
}

.strip svg {
  width: 8px;
  height: 4px;
}

.frame {
  flex: 1;
  min-height: 0;
  display: flex;
  flex-direction: column;
  border: 1px solid #d9dce1;
  background: #fff;
}

.chart {
  flex: 1;
  min-height: 0;
  position: relative;
}

#chart {
  display: block;
  width: 100%;
  height: 100%;
}

/* chart drawing */
#chart path { fill: none; }
#chart .area { fill: #e4e4f0; }
#chart .bb { stroke: #6464f0; }
#chart .mid { stroke: #e0566a; }
.dash path { stroke: #666; stroke-dasharray: 6 5; }
.dash .light { stroke: #999; }
.cross { stroke: #999; stroke-dasharray: 6 5; }
#chart .pink { fill: #f2dad6; stroke: #a52a2a; }
.red { stroke: #f11; stroke-width: 1.2; }
.red.wide { stroke: #f00; stroke-width: 2; }
.red.soft { stroke: #f77; }
.rsi { stroke: #555; }
.arc { stroke: #2a9d8f; }
.last { stroke: #3d6ae0; stroke-dasharray: 2 1; }
.axis, .tick { stroke: #555; }

#chart .note path {
  fill: #fff;
  fill-opacity: .5;
  stroke: #8a8a8a;
  stroke-width: 2;
}

.note text {
  font: bold 11px "Liberation Sans", Arial, sans-serif;
  fill: #708090;
}

#chart .tri path {
  fill: #ff0;
  fill-opacity: .5;
  stroke: #a02828;
}

.wick-up { stroke: #1c5634; }
.wick-down { stroke: #1c5634; }
.up { fill: #00cc78; stroke: #0f5a36; }
.down { fill: #ff6860; stroke: #6b1414; }

.tagbox path { stroke: #6f8296; }

.tagbox text {
  font: 14px "DejaVu Sans", sans-serif;
  fill: #111;
}

.tagbox .big { font-size: 20px; }
.tagbox .r { fill: #f11; }

#chart .callout {
  fill: #fff;
  fill-opacity: .5;
  stroke: #b04444;
  stroke-width: 2;
}

.memo text {
  font: 20px "Noto Sans CJK TC", sans-serif;
  fill: #00f;
}

.memo .num {
  font-family: "DejaVu Sans", sans-serif;
  font-size: 19px;
}

.mark-b {
  font: bold 21px "Liberation Sans", Arial, sans-serif;
  fill: #111;
  stroke: #111;
}

.mark-c {
  font: 14px "Liberation Sans", Arial, sans-serif;
  fill: #666;
}

#chart .mark path { fill: #f90; }

.label {
  font: 11px "Liberation Sans", Arial, sans-serif;
  fill: #555;
}

.label.bold { font-weight: bold; }
.label.inv { font-weight: bold; fill: #fff; }

/* legend over the chart */
.legend {
  position: absolute;
  left: 5px;
  top: 10px;
}

.row {
  display: flex;
  align-items: center;
  gap: 3px;
  height: 20px;
}

.row.dim {
  color: #cfcfcf;
}

.row button {
  width: 14px;
  height: 14px;
  background: #d8d8d8;
  color: #fff;
}

.row button.hid {
  background: #3bb3e4;
}

.row button svg {
  width: 14px;
  height: 14px;
}

.row .car {
  width: 8px;
  height: 5px;
  margin: 0 6px 0 2px;
  color: #bbb;
}

.row.main {
  font-size: 16px;
}

.row.main .car {
  margin-left: 6px;
}

.row .fold {
  width: 13px;
  height: 13px;
  margin-right: 3px;
  border: 1px solid #666;
  border-radius: 2px;
  background: #fff;
  color: #555;
  font-size: 14px;
  line-height: 10px;
}

.ohlc {
  display: flex;
  gap: 10px;
  margin-left: 6px;
  font-size: 14px;
}

.ohlc b {
  font-weight: 400;
  color: #225437;
}

.vals {
  display: flex;
  gap: 11px;
  margin-left: 8px;
  font-size: 11px;
}

.c-red { color: #f00; }
.c-blue { color: #11e; }
.c-black { color: #000; }

.ranges {
  display: flex;
  align-items: center;
  height: 22px;
  padding-left: 4px;
  background: #e4e4e6;
  color: #999;
}

.ranges button {
  min-width: 39px;
  height: 14px;
  padding: 0 10px;
  border-right: 1px solid #bbb;
  font-size: 11px;
  font-weight: 600;
}

.ranges .goto {
  border-right: 0;
  padding: 0 13px;
}

.ranges .sep-l {
  min-width: 34px;
  margin-left: 12px;
  border-left: 1px solid #bbb;
}

.ranges .auto {
  min-width: 49px;
  color: #5bbfe6;
}

.clock {
  font-size: 11px;
}

.cog {
  width: 14px;
  height: 14px;
}

.scrollbar {
  width: 17px;
  display: flex;
  flex-direction: column;
  align-items: center;
  padding: 7px 0;
  background: #f1f1f1;
}

.scrollbar svg {
  width: 8px;
  height: 5px;
}

.track {
  flex: 1;
  padding-top: 127px;
}

.thumb {
  width: 13px;
  height: 201px;
  background: #c1c1c1;
}

/* taskbar */
.taskbar {
  display: flex;
  align-items: center;
  height: 40px;
  padding: 0 20px 0 17px;
  border-top: 1px solid #6b3b36;
  background: #834f48;
  color: #fff;
}

.task {
  width: 58px;
  height: 39px;
  margin-right: 3px;
  border: 1px solid #b28d88;
  background: #976862;
}

.task svg {
  width: 32px;
  height: 32px;
}

.task.bare {
  border-color: transparent;
  background: none;
}

.task.stack {
  width: 53px;
  margin-right: 10px;
  box-shadow: 3px 0 0 #834f48, 4px 0 0 #b28d88, 6px 0 0 #834f48, 7px 0 0 #b28d88;
}

.task.current {
  border-color: #e8dad8;
  background: #c4a7a3;
}

.tray {
  display: flex;
  align-items: center;
  gap: 8px;
}

.tray button {
  width: 16px;
  height: 16px;
  font-size: 14px;
}

.tray .nan {
  color: #f01010;
}

.tray svg {
  width: 16px;
  height: 16px;
}

.tray time {
  display: flex;
  flex-direction: column;
  align-items: center;
  width: 60px;
  margin-left: 6px;
  font-size: 11px;
  line-height: 17px;
}
```
FILE: chart.js
```js
var NS = 'http://www.w3.org/2000/svg';

function add(parent, name, attrs, text) {
  var el = document.createElementNS(NS, name);
  for (var k in attrs) el.setAttribute(k, attrs[k]);
  if (text) el.textContent = text;
  document.getElementById(parent).appendChild(el);
  return el;
}

// x, body top, body bottom, high, low, up
var candles = [
  [63,517,603,506,622,0],[79,593,603,583,615,1],[95,594,618,593,642,0],[112,610,619,608,620,1],
  [128,601,614,600,622,0],[144,613,614,610,652,0],[160,611,614,607,623,1],[177,600,612,592,612,1],
  [193,575,603,554,610,1],[209,568,574,555,580,1],[225,568,576,562,592,0],[241,574,579,555,610,0],
  [257,584,612,576,625,0],[273,601,612,590,629,1],[290,571,600,558,623,1],[306,571,572,562,574,0],
  [322,556,570,551,570,1],[338,551,557,534,569,1],[354,551,552,545,560,1],[371,550,551,537,555,1],
  [387,508,553,496,560,1],[403,501,507,481,513,1],[419,501,517,499,540,0],[435,476,516,467,526,1],
  [451,476,500,473,509,0],[468,500,519,490,527,0],[484,517,522,496,526,0],[500,519,520,518,528,1],
  [516,516,519,510,525,1],[532,502,515,501,530,1],[548,502,514,498,515,0],[565,507,514,499,518,1],
  [581,508,545,507,566,0],[597,543,557,521,564,0],[613,531,557,528,558,1],[629,431,532,403,532,1],
  [646,424,434,383,451,1],[662,396,424,386,425,1],[678,393,396,372,398,1],[694,375,397,372,397,1],
  [710,374,388,374,390,0],[726,386,393,386,410,0],[743,389,392,386,401,1],[759,370,390,361,392,1],
  [775,337,373,337,373,1],[791,337,364,337,374,0],[807,311,363,301,367,1],[824,261,312,204,313,1]
];

var upper = '58,483 79,490 95,484 112,482 128,484 144,486 160,489 177,492 209,493 225,494 241,496 257,500 273,504 290,508 306,511 322,512 338,514 354,520 371,520 387,517 403,509 419,508 435,493 451,486 468,480 500,476 516,474 532,471 565,468 597,468 613,470 629,458 662,425 694,393 710,378 726,367 743,358 759,346 775,328 791,319 807,300 824,272';
var lower = '58,580 79,586 95,598 112,607 128,617 144,625 160,631 177,634 209,635 241,636 257,641 273,642 306,642 322,640 338,638 354,633 371,632 387,635 403,643 419,648 451,650 468,646 484,641 500,636 516,628 532,621 548,615 565,610 597,605 613,600 646,593 662,598 678,598 694,601 710,600 743,592 759,592 775,595 791,592 807,596 824,604';
var middle = '58,532 79,538 112,546 144,555 160,560 177,562 209,563 225,564 241,567 257,571 273,573 290,575 338,577 371,577 403,579 419,579 435,575 468,564 500,554 520,549 543,542 565,539 597,537 613,534 629,526 662,510 694,495 710,488 759,469 775,461 791,455 807,448 824,437';
var rsi = '58,473 63,508 79,496 95,519 112,510 128,513 144,514 160,510 177,494 193,459 209,450 225,458 241,465 257,505 273,490 290,447 306,447 322,426 338,418 354,418 371,417 387,360 403,350 419,376 435,327 451,366 468,394 484,398 500,395 516,391 532,372 548,391 565,382 581,444 597,462 613,423 629,308 646,302 662,276 678,273 694,258 710,278 726,286 743,283 759,265 775,236 791,282 807,238 824,203';

add('band', 'path', { 'class': 'area', d: 'M' + upper + ' L' + lower.split(' ').reverse().join(' ') + 'z' });
add('band', 'path', { 'class': 'bb', d: 'M' + upper });
add('band', 'path', { 'class': 'bb', d: 'M' + lower });
add('band', 'path', { 'class': 'mid', d: 'M' + middle });
document.getElementById('rsi').setAttribute('d', 'M' + rsi);

candles.forEach(function (c) {
  var x = c[0] + 0.5;
  add('candles', 'line', { x1: x, x2: x, y1: c[3], y2: c[4], 'class': c[5] ? 'wick-up' : 'wick-down' });
  add('candles', 'rect', { x: Math.max(x - 5, 57.5), y: c[1] + 0.5, width: 10, height: Math.max(c[2] - c[1] - 1, 1), 'class': c[5] ? 'up' : 'down' });
});

// price scale
[['1520.00',178],['1517.50',209],['1510.00',300],['1507.50',330],['1505.00',360],['1502.50',391],
 ['1500.00',421],['1497.50',451],['1495.00',482],['1492.50',512],['1490.00',542],['1487.50',573],
 ['1482.50',633],['1480.00',664]].forEach(function (p) {
  add('prices', 'path', { d: 'M1292 ' + (p[1] + 0.5) + 'h4', 'class': 'tick' });
  add('prices', 'text', { x: 1299, y: p[1] + 5, 'class': 'label' }, p[0]);
});

[['1514.76',243,'#585858'],['1513.22',262,'#4a76e8'],['1512.30',278,'#0000ff'],
 ['1498.67',438,'#ff0000'],['1485.04',604,'#0000ff']].forEach(function (p) {
  add('prices', 'rect', { x: 1292, y: p[1] - 8, width: 51, height: 16, fill: p[2] });
  add('prices', 'path', { d: 'M1292 ' + (p[1] - 0.5) + 'h4', stroke: '#fff' });
  add('prices', 'text', { x: 1299, y: p[1] + 4, 'class': 'label inv' }, p[0]);
});

// time scale
[['12:00',80],['22',177],['12:00',274],['23',371],['12:00',468],['24',566],['12:00',663],['25',760],
 ['10:00',841],['27',922],['29',1148],['12:00',1245]].forEach(function (t) {
  add('times', 'path', { d: 'M' + (t[1] + 0.5) + ' 682v3', 'class': 'tick' });
  add('times', 'text', { x: t[1], y: 696, 'text-anchor': 'middle', 'class': t[0].length < 3 ? 'label bold' : 'label' }, t[0]);
});
add('times', 'rect', { x: 980, y: 682, width: 110, height: 18, fill: '#585858' });
add('times', 'path', { d: 'M1035.5 682v3', stroke: '#fff' });
add('times', 'text', { x: 1035, y: 696, 'text-anchor': 'middle', 'class': 'label inv' }, '2019-10-28 10:00:00');
```
